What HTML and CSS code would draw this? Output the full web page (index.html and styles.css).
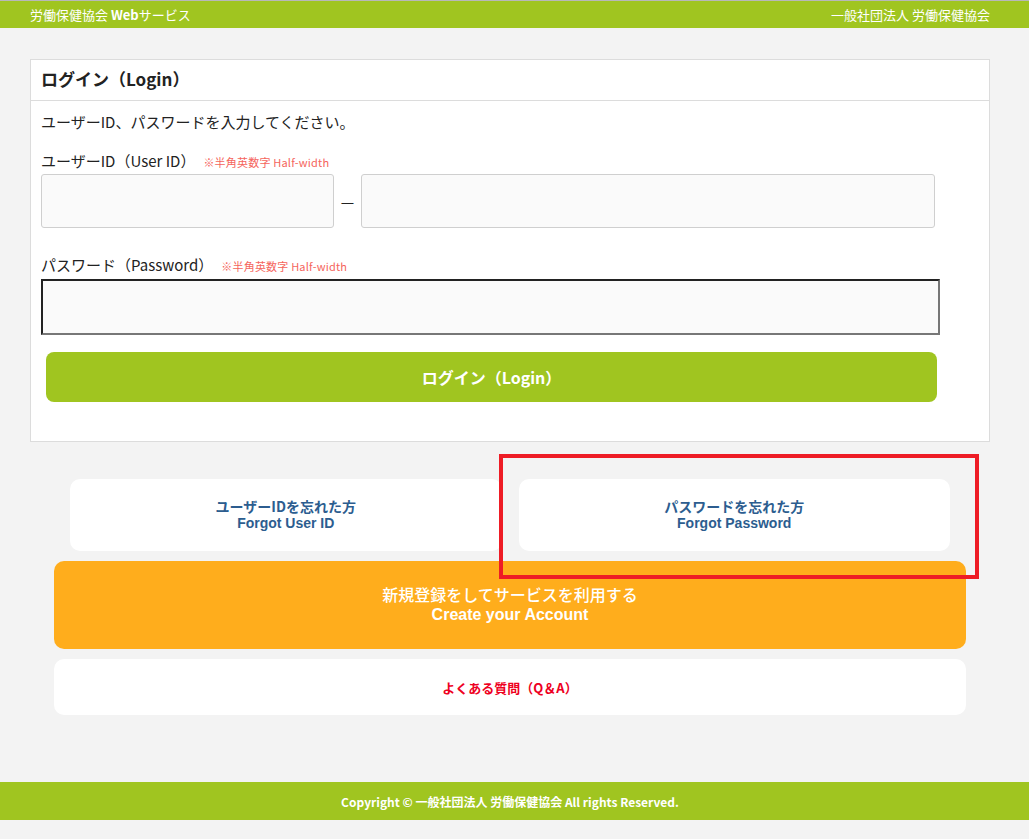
FILE: index.html
```html
<!DOCTYPE html>
<html lang="ja">
<head>
<meta charset="utf-8">
<title>労働保健協会 Webサービス</title>
<link rel="stylesheet" href="styles.css">
</head>
<body>
<header class="topbar">
  <div class="topbar-inner">
    <div class="site-name">労働保健協会 <b>Web</b>サービス</div>
    <div class="org-name">一般社団法人 労働保健協会</div>
  </div>
</header>

<main class="wrap">
  <section class="card">
    <h1 class="card-title">ログイン（Login）</h1>
    <div class="card-body">
      <p class="intro">ユーザーID、パスワードを入力してください。</p>

      <div class="label">ユーザーID（User ID）<span class="note">※半角英数字 Half-width</span></div>
      <div class="id-row">
        <input class="field field-id1" type="text">
        <span class="dash">—</span>
        <input class="field field-id2" type="text">
      </div>

      <div class="label label-pw">パスワード（Password）<span class="note">※半角英数字 Half-width</span></div>
      <input class="field field-pw" type="password">

      <button class="login-btn" type="button">ログイン（Login）</button>
    </div>
  </section>

  <div class="forgot-row">
    <a class="forgot" href="#"><span class="line-jp">ユーザーIDを忘れた方</span><span class="line-en">Forgot User ID</span></a>
    <a class="forgot" href="#"><span class="line-jp">パスワードを忘れた方</span><span class="line-en">Forgot Password</span></a>
  </div>

  <a class="create" href="#"><span class="create-jp">新規登録をしてサービスを利用する</span><span class="create-en">Create your Account</span></a>

  <a class="faq" href="#">よくある質問（Q＆A）</a>

  <div class="highlight"></div>
</main>

<footer class="footer">Copyright © 一般社団法人 労働保健協会 All rights Reserved.</footer>
</body>
</html>
```

FILE: styles.css
```css
html, body {
  margin: 0;
  padding: 0;
}
body {
  background: #f3f3f3;
  font-family: "Noto Sans CJK JP", "Noto Sans", sans-serif;
  color: #222;
  position: relative;
  min-height: 839px;
}
.topbar {
  border-top: 1px solid #b8b8b8;
  background: #a0c520;
  height: 27px;
  color: #fff;
  font-size: 13px;
}
.topbar-inner {
  width: 960px;
  margin-left: 30px;
  display: flex;
  justify-content: space-between;
  align-items: center;
  height: 27px;
}
.site-name b { font-weight: 700; }

.wrap {
  width: 960px;
  margin-left: 30px;
  padding-top: 31px;
  padding-bottom: 67px;
}
.card {
  background: #fff;
  border: 1px solid #dcdcdc;
}
.card-title {
  margin: 0;
  height: 40px;
  line-height: 38px;
  padding-left: 10px;
  font-size: 17px;
  font-weight: 700;
  color: #222;
  border-bottom: 1px solid #dcdcdc;
}
.card-body {
  padding: 10px 10px 39px 10px;
}
.intro {
  margin: 0;
  font-size: 15px;
  line-height: 22px;
}
.label {
  margin-top: 17px;
  font-size: 15px;
  line-height: 22px;
}
.label-pw { margin-top: 26px; }
.note {
  font-size: 11px;
  color: #f5645c;
  margin-left: 8px;
  letter-spacing: 0.2px;
}
.id-row {
  display: flex;
  align-items: center;
  margin-top: 1px;
}
.field {
  box-sizing: border-box;
  background: #fafafa;
  border: 1px solid #cfcfcf;
  border-radius: 3px;
  height: 54px;
  margin: 0;
  padding: 0 8px;
  font-size: 15px;
}
.field-id1 { width: 293px; }
.field-id2 { width: 574px; }
.dash {
  width: 27px;
  text-align: center;
  font-size: 15px;
  color: #222;
}
.field-pw {
  display: block;
  width: 899px;
  height: 56px;
  margin-top: 2px;
  border-radius: 0;
  border-width: 2px;
  border-style: solid;
  border-color: #222 #777 #777 #222;
}
.login-btn {
  display: block;
  width: 891px;
  height: 50px;
  margin: 17px 0 0 5px;
  border: 0;
  border-radius: 8px;
  background: #a0c520;
  color: #fff;
  font-family: inherit;
  font-size: 16px;
  font-weight: 700;
}

.forgot-row {
  display: flex;
  gap: 17px;
  margin: 37px 40px 0 40px;
}
.forgot {
  flex: 1;
  height: 72px;
  background: #fff;
  border-radius: 10px;
  display: flex;
  flex-direction: column;
  align-items: center;
  justify-content: center;
  text-align: center;
  color: #2c5d8f;
  font-size: 14px;
  font-weight: 700;
  text-decoration: none;
}
.line-jp {
  display: block;
  line-height: 18px;
  margin-top: -3px;
}
.line-en {
  display: block;
  line-height: 16px;
  font-family: "Liberation Sans", "Noto Sans", sans-serif;
}
.create {
  display: flex;
  flex-direction: column;
  align-items: center;
  justify-content: center;
  height: 88px;
  margin: 10px 24px 0 24px;
  background: #ffad1c;
  border-radius: 10px;
  color: #fff;
  font-size: 16px;
  text-decoration: none;
  text-align: center;
}
.create-jp {
  display: block;
  font-weight: 500;
  line-height: 21px;
  margin-top: -3px;
}
.create-en {
  display: block;
  font-weight: 700;
  line-height: 19px;
  font-family: "Liberation Sans", "Noto Sans", sans-serif;
}
.faq {
  display: flex;
  align-items: center;
  justify-content: center;
  height: 56px;
  margin: 10px 24px 0 24px;
  background: #fff;
  border-radius: 10px;
  color: #ee0022;
  font-size: 13px;
  font-weight: 700;
  text-decoration: none;
}
.highlight {
  position: absolute;
  left: 499px;
  top: 454px;
  width: 480px;
  height: 125px;
  box-sizing: border-box;
  border: 4px solid #ee1c25;
  pointer-events: none;
}
.footer {
  height: 38px;
  background: #a0c520;
  color: #fff;
  font-size: 12px;
  font-weight: 700;
  display: flex;
  align-items: center;
  justify-content: center;
  width: 100%;
  padding-right: 9px;
  box-sizing: border-box;
}
```
